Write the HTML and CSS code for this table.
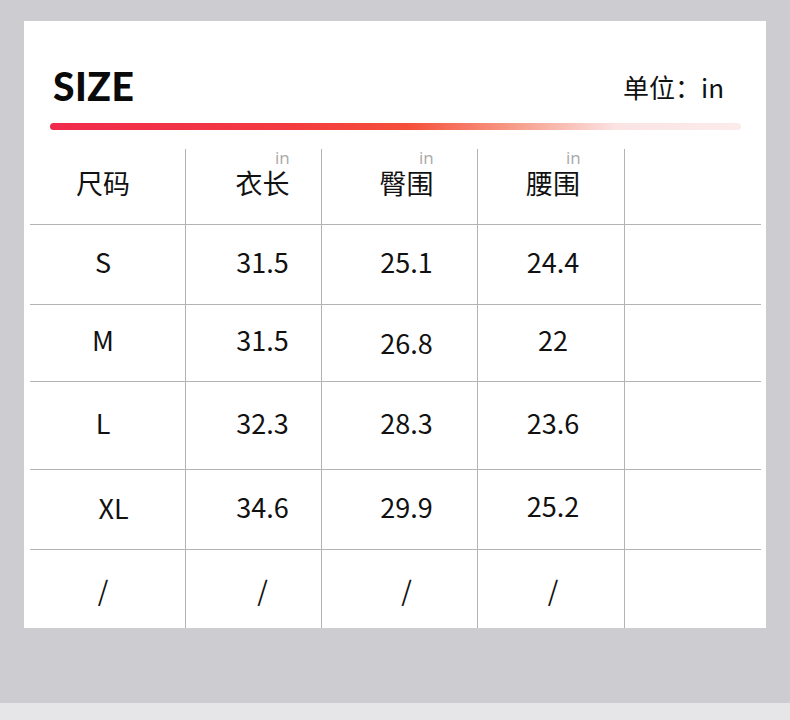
FILE: index.html
```html
<!DOCTYPE html>
<html lang="zh">
<head>
<meta charset="utf-8">
<title>SIZE</title>
<link rel="stylesheet" href="styles.css">
</head>
<body>
<div class="page">
  <div class="card">
    <div class="head">
      <h1 class="title">SIZE</h1>
      <div class="unit">单位：in</div>
    </div>
    <div class="bar"></div>
    <div class="table">
      <div class="cell c1 hd">尺码</div>
      <div class="cell c2 hd">衣长<span class="in in2">in</span></div>
      <div class="cell c3 hd">臀围<span class="in in3">in</span></div>
      <div class="cell c4 hd">腰围<span class="in in4">in</span></div>
      <div class="cell c5 hd"></div>

      <div class="cell c1 r">S</div>
      <div class="cell c2 r">31.5</div>
      <div class="cell c3 r">25.1</div>
      <div class="cell c4 r">24.4</div>
      <div class="cell c5 r"></div>

      <div class="cell c1 r">M</div>
      <div class="cell c2 r">31.5</div>
      <div class="cell c3 r low">26.8</div>
      <div class="cell c4 r">22</div>
      <div class="cell c5 r"></div>

      <div class="cell c1 r">L</div>
      <div class="cell c2 r">32.3</div>
      <div class="cell c3 r">28.3</div>
      <div class="cell c4 r">23.6</div>
      <div class="cell c5 r"></div>

      <div class="cell c1 r xl">XL</div>
      <div class="cell c2 r">34.6</div>
      <div class="cell c3 r">29.9</div>
      <div class="cell c4 r high">25.2</div>
      <div class="cell c5 r"></div>

      <div class="cell c1 r sl">/</div>
      <div class="cell c2 r sl">/</div>
      <div class="cell c3 r sl">/</div>
      <div class="cell c4 r sl">/</div>
      <div class="cell c5 r sl"></div>
    </div>
  </div>
</div>
<div class="strip"></div>
</body>
</html>
```

FILE: styles.css
```css
html, body {
  margin: 0;
  padding: 0;
}
body {
  width: 790px;
  height: 720px;
  background: #cdccd1;
  font-family: "Noto Sans CJK SC", "Noto Sans", sans-serif;
  color: #111;
  position: relative;
  overflow: hidden;
}
.page {
  padding: 21px 0 0 24px;
}
.card {
  width: 742px;
  height: 607px;
  background: #fff;
  overflow: hidden;
}
.head {
  display: flex;
  justify-content: space-between;
  align-items: flex-end;
  padding: 0 42px 0 29px;
  height: 88px;
}
.title {
  margin: 0;
  font-family: "Lato", "Noto Sans", sans-serif;
  font-weight: 900;
  font-size: 39px;
  line-height: 1;
  letter-spacing: 0.5px;
  color: #0a0a0a;
  padding-bottom: 3px;
}
.unit {
  font-size: 26px;
  line-height: 1;
  padding-bottom: 9px;
  color: #111;
}
.bar {
  margin: 14px 0 0 26px;
  width: 691px;
  height: 7px;
  border-radius: 4px;
  background: linear-gradient(90deg, #f12b4c 0%, #f33a40 35%, #f5503a 52%, #f7a08e 68%, #fbe3e3 82%, #fcebeb 100%);
}
.table {
  margin: 19px 0 0 6px;
  display: grid;
  grid-template-columns: 155px 136px 156px 147px 137px;
  grid-template-rows: 75px 80px 77px 88px 80px 79px;
}
.cell {
  position: relative;
  display: flex;
  align-items: center;
  justify-content: center;
  font-size: 27px;
  line-height: 1;
  box-sizing: border-box;
}
.r {
  border-top: 1px solid #b3b3b3;
  padding-bottom: 7px;
}
.c2, .c3, .c4, .c5 {
  border-left: 1px solid #b3b3b3;
}
.c1 { padding-right: 9px; }
.c2 { padding-left: 18px; }
.c3 { padding-left: 14px; }
.c4 { padding-left: 4px; }
.hd { padding-bottom: 8px; }
.c1.xl { padding-right: 0; padding-left: 12px; padding-bottom: 5px; }
.r.low { padding-bottom: 1px; }
.r.high { padding-bottom: 9px; }
.r.sl { padding-bottom: 0; }
.in {
  position: absolute;
  top: 0;
  font-family: "Open Sans", "Noto Sans", sans-serif;
  font-size: 17px;
  color: #a8a8a8;
  line-height: 18px;
}
.in2 { left: 89px; }
.in3 { left: 97px; }
.in4 { left: 88px; }
.strip {
  position: absolute;
  left: 0;
  top: 703px;
  width: 790px;
  height: 17px;
  background: #e6e6e8;
}
```
